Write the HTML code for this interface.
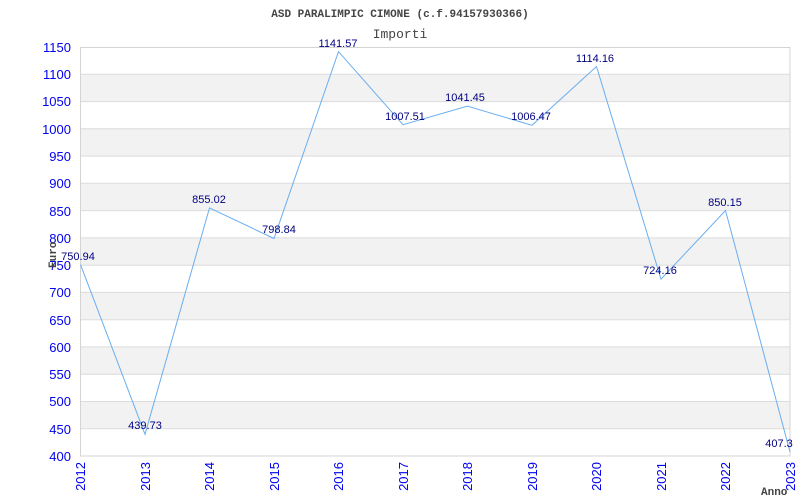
<!DOCTYPE html>
<html><head><meta charset="utf-8"><style>html,body{margin:0;padding:0;background:#fff}svg{display:block}</style></head>
<body>
<svg width="800" height="500" xmlns="http://www.w3.org/2000/svg" font-family="Liberation Sans, sans-serif">
<rect width="800" height="500" fill="#fff"/>
<g fill="#f2f2f2">
<rect x="80.5" y="74.3" width="709.5" height="27.3"/>
<rect x="80.5" y="128.8" width="709.5" height="27.3"/>
<rect x="80.5" y="183.3" width="709.5" height="27.3"/>
<rect x="80.5" y="237.9" width="709.5" height="27.3"/>
<rect x="80.5" y="292.4" width="709.5" height="27.3"/>
<rect x="80.5" y="346.9" width="709.5" height="27.3"/>
<rect x="80.5" y="401.5" width="709.5" height="27.3"/>
</g>
<g stroke="#dcdcdc" stroke-width="1">
<line x1="80" y1="74.3" x2="790" y2="74.3"/><line x1="80" y1="101.6" x2="790" y2="101.6"/>
<line x1="80" y1="128.8" x2="790" y2="128.8"/><line x1="80" y1="156.1" x2="790" y2="156.1"/>
<line x1="80" y1="183.3" x2="790" y2="183.3"/><line x1="80" y1="210.6" x2="790" y2="210.6"/>
<line x1="80" y1="237.9" x2="790" y2="237.9"/><line x1="80" y1="265.2" x2="790" y2="265.2"/>
<line x1="80" y1="292.4" x2="790" y2="292.4"/><line x1="80" y1="319.7" x2="790" y2="319.7"/>
<line x1="80" y1="346.9" x2="790" y2="346.9"/><line x1="80" y1="374.2" x2="790" y2="374.2"/>
<line x1="80" y1="401.5" x2="790" y2="401.5"/><line x1="80" y1="428.8" x2="790" y2="428.8"/>
</g>
<rect x="80.5" y="47.5" width="709.5" height="408.5" fill="none" stroke="#d4d4d4"/>
<polyline fill="none" stroke="#6aaef0" stroke-width="1" points="80.5,264.6 145,434.3 209.5,207.9 274,238.5 338.5,51.6 403,124.7 467.5,106.2 532,125.3 596.5,66.5 661,279.2 725.5,210.5 790,452"/>
<g fill="#0000ee" font-size="13" text-anchor="end">
<text x="71" y="52">1150</text><text x="71" y="79">1100</text><text x="71" y="106">1050</text>
<text x="71" y="134">1000</text><text x="71" y="161">950</text><text x="71" y="188">900</text>
<text x="71" y="216">850</text><text x="71" y="243">800</text><text x="71" y="270">750</text>
<text x="71" y="297">700</text><text x="71" y="325">650</text><text x="71" y="352">600</text>
<text x="71" y="379">550</text><text x="71" y="406">500</text><text x="71" y="434">450</text>
<text x="71" y="461">400</text>
</g>
<g fill="#0000ee" font-size="13" text-anchor="end">
<text transform="translate(85,462) rotate(-90)">2012</text>
<text transform="translate(150,462) rotate(-90)">2013</text>
<text transform="translate(214,462) rotate(-90)">2014</text>
<text transform="translate(279,462) rotate(-90)">2015</text>
<text transform="translate(343,462) rotate(-90)">2016</text>
<text transform="translate(408,462) rotate(-90)">2017</text>
<text transform="translate(472,462) rotate(-90)">2018</text>
<text transform="translate(537,462) rotate(-90)">2019</text>
<text transform="translate(601,462) rotate(-90)">2020</text>
<text transform="translate(666,462) rotate(-90)">2021</text>
<text transform="translate(730,462) rotate(-90)">2022</text>
<text transform="translate(795,462) rotate(-90)">2023</text>
</g>
<g fill="#000080" font-size="11" text-anchor="middle">
<text x="78" y="260">750.94</text><text x="145" y="429">439.73</text>
<text x="209" y="203">855.02</text><text x="279" y="233">798.84</text>
<text x="338" y="47">1141.57</text><text x="405" y="120">1007.51</text>
<text x="465" y="101">1041.45</text><text x="531" y="120">1006.47</text>
<text x="595" y="62">1114.16</text><text x="660" y="274">724.16</text>
<text x="725" y="206">850.15</text><text x="779" y="447">407.3</text>
</g>
<text x="400" y="17" text-anchor="middle" font-family="Liberation Mono, monospace" font-weight="bold" font-size="11" fill="#444">ASD PARALIMPIC CIMONE (c.f.94157930366)</text>
<text x="400" y="38" text-anchor="middle" font-family="Liberation Mono, monospace" font-size="13" fill="#444">Importi</text>
<text transform="translate(56,268) rotate(-90)" font-family="Liberation Mono, monospace" font-weight="bold" font-size="11" fill="#444">Euro</text>
<text x="761" y="495" font-family="Liberation Mono, monospace" font-weight="bold" font-size="11" fill="#444">Anno</text>
</svg>
</body></html>
